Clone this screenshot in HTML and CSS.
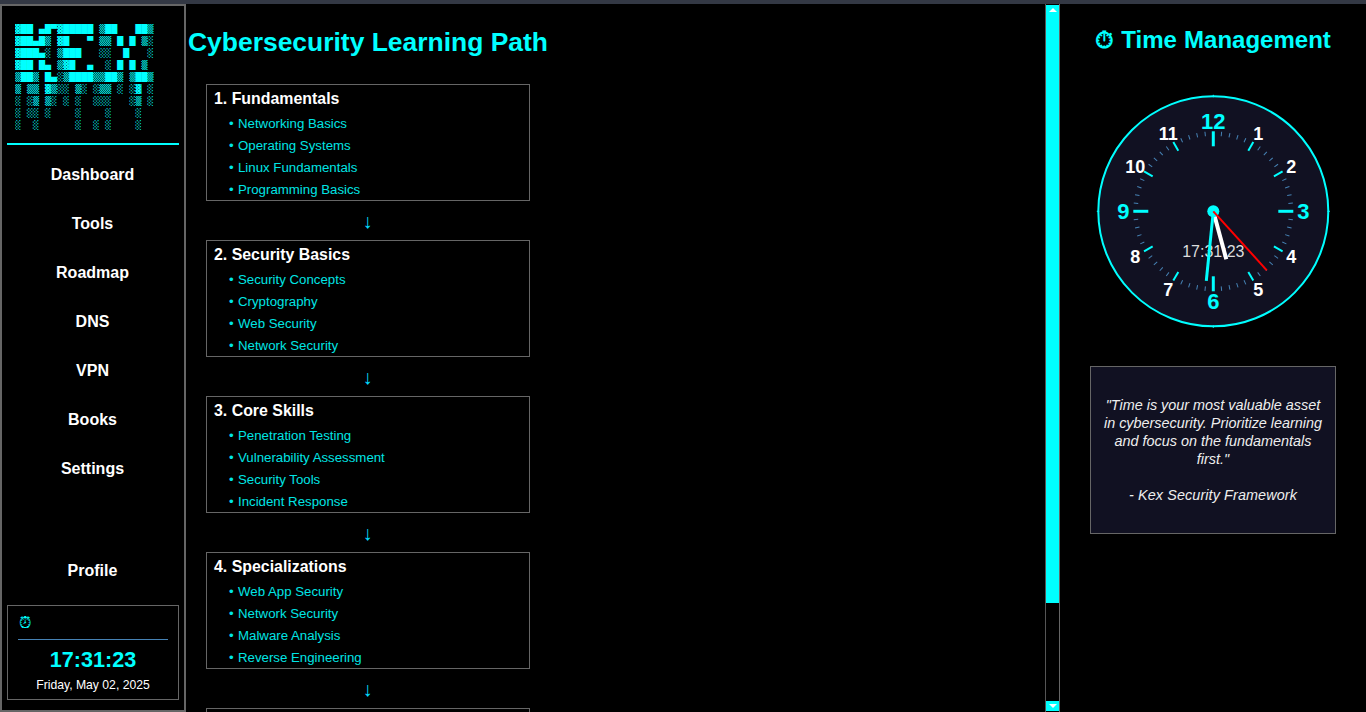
FILE: index.html
```html
<!DOCTYPE html>
<html lang="en">
<head>
<meta charset="utf-8">
<title>Cybersecurity Learning Path</title>
<link rel="stylesheet" href="styles.css">
</head>
<body>
<div class="app">
  <aside class="sidebar">
    <div class="logo-wrap">
      <div class="logo">
        <div class="logo-row">▓██ ▄█▀▓█████ ▒██   ██▒</div>
        <div class="logo-row">▓██▄█▒ ▓█   ▀ ▒▒ █ █ ▒░</div>
        <div class="logo-row">▓███▄░ ▒███   ░░  █   ░</div>
        <div class="logo-row">▓██ █▄ ▒▓█  ▄  ░ █ █ ▒</div>
        <div class="logo-row">▒██▒ █▄░▒████▒▒██▒ ▒██▒</div>
        <div class="logo-row">▒ ▒▒ ▓▒░░ ▒░ ░▒▒ ░ ░▓ ░</div>
        <div class="logo-row">░ ░▒ ▒░ ░ ░  ░░░   ░▒ ░</div>
        <div class="logo-row">░ ░░ ░    ░    ░    ░</div>
        <div class="logo-row">░  ░      ░  ░ ░    ░</div>
      </div>
    </div>
    <nav class="nav">
      <a class="nav-item">Dashboard</a>
      <a class="nav-item">Tools</a>
      <a class="nav-item">Roadmap</a>
      <a class="nav-item">DNS</a>
      <a class="nav-item">VPN</a>
      <a class="nav-item">Books</a>
      <a class="nav-item">Settings</a>
    </nav>
    <a class="nav-item profile">Profile</a>
    <div class="side-clock">
      <div class="side-clock-head">⏰&#xFE0E;</div>
      <div class="side-time">17:31:23</div>
      <div class="side-date">Friday, May 02, 2025</div>
    </div>
  </aside>

  <main class="main">
    <h1 class="page-title">Cybersecurity Learning Path</h1>
    <div class="path">
      <section class="step">
        <h2 class="step-title">1. Fundamentals</h2>
        <ul class="step-list">
          <li>Networking Basics</li>
          <li>Operating Systems</li>
          <li>Linux Fundamentals</li>
          <li>Programming Basics</li>
        </ul>
      </section>
      <div class="arrow">↓</div>
      <section class="step">
        <h2 class="step-title">2. Security Basics</h2>
        <ul class="step-list">
          <li>Security Concepts</li>
          <li>Cryptography</li>
          <li>Web Security</li>
          <li>Network Security</li>
        </ul>
      </section>
      <div class="arrow">↓</div>
      <section class="step">
        <h2 class="step-title">3. Core Skills</h2>
        <ul class="step-list">
          <li>Penetration Testing</li>
          <li>Vulnerability Assessment</li>
          <li>Security Tools</li>
          <li>Incident Response</li>
        </ul>
      </section>
      <div class="arrow">↓</div>
      <section class="step">
        <h2 class="step-title">4. Specializations</h2>
        <ul class="step-list">
          <li>Web App Security</li>
          <li>Network Security</li>
          <li>Malware Analysis</li>
          <li>Reverse Engineering</li>
        </ul>
      </section>
      <div class="arrow">↓</div>
      <section class="step"></section>
    </div>
  </main>

  <div class="scrollbar">
    <div class="sb-btn"><span class="sb-up"></span></div>
    <div class="sb-thumb"></div>
    <div class="sb-track"></div>
    <div class="sb-btn"><span class="sb-down"></span></div>
  </div>

  <aside class="time-panel">
    <h2 class="time-title">⏱ Time Management</h2>
    <svg class="clock" width="240" height="240" viewBox="-120.3 -120.3 240 240">
      <defs>
        <line id="mt" class="tick-min" x1="0" y1="-80" x2="0" y2="-75.5"/>
        <line id="ht" class="tick-hour" x1="0" y1="-80" x2="0" y2="-70"/>
        <line id="ct" class="tick-card" x1="0" y1="-80" x2="0" y2="-65"/>
        <line id="et" class="tick-edge" x1="0" y1="-116.5" x2="0" y2="-114"/>
      </defs>
      <circle class="face" r="115"/>
      <g>
        <use href="#et"/><use href="#et" transform="rotate(90)"/><use href="#et" transform="rotate(180)"/><use href="#et" transform="rotate(270)"/>
      </g>
      <g>
        <use href="#mt" transform="rotate(6)"/><use href="#mt" transform="rotate(12)"/><use href="#mt" transform="rotate(18)"/><use href="#mt" transform="rotate(24)"/>
        <use href="#mt" transform="rotate(36)"/><use href="#mt" transform="rotate(42)"/><use href="#mt" transform="rotate(48)"/><use href="#mt" transform="rotate(54)"/>
        <use href="#mt" transform="rotate(66)"/><use href="#mt" transform="rotate(72)"/><use href="#mt" transform="rotate(78)"/><use href="#mt" transform="rotate(84)"/>
        <use href="#mt" transform="rotate(96)"/><use href="#mt" transform="rotate(102)"/><use href="#mt" transform="rotate(108)"/><use href="#mt" transform="rotate(114)"/>
        <use href="#mt" transform="rotate(126)"/><use href="#mt" transform="rotate(132)"/><use href="#mt" transform="rotate(138)"/><use href="#mt" transform="rotate(144)"/>
        <use href="#mt" transform="rotate(156)"/><use href="#mt" transform="rotate(162)"/><use href="#mt" transform="rotate(168)"/><use href="#mt" transform="rotate(174)"/>
        <use href="#mt" transform="rotate(186)"/><use href="#mt" transform="rotate(192)"/><use href="#mt" transform="rotate(198)"/><use href="#mt" transform="rotate(204)"/>
        <use href="#mt" transform="rotate(216)"/><use href="#mt" transform="rotate(222)"/><use href="#mt" transform="rotate(228)"/><use href="#mt" transform="rotate(234)"/>
        <use href="#mt" transform="rotate(246)"/><use href="#mt" transform="rotate(252)"/><use href="#mt" transform="rotate(258)"/><use href="#mt" transform="rotate(264)"/>
        <use href="#mt" transform="rotate(276)"/><use href="#mt" transform="rotate(282)"/><use href="#mt" transform="rotate(288)"/><use href="#mt" transform="rotate(294)"/>
        <use href="#mt" transform="rotate(306)"/><use href="#mt" transform="rotate(312)"/><use href="#mt" transform="rotate(318)"/><use href="#mt" transform="rotate(324)"/>
        <use href="#mt" transform="rotate(336)"/><use href="#mt" transform="rotate(342)"/><use href="#mt" transform="rotate(348)"/><use href="#mt" transform="rotate(354)"/>
      </g>
      <g>
        <use href="#ht" transform="rotate(30)"/><use href="#ht" transform="rotate(60)"/><use href="#ht" transform="rotate(120)"/><use href="#ht" transform="rotate(150)"/>
        <use href="#ht" transform="rotate(210)"/><use href="#ht" transform="rotate(240)"/><use href="#ht" transform="rotate(300)"/><use href="#ht" transform="rotate(330)"/>
        <use href="#ct"/><use href="#ct" transform="rotate(90)"/><use href="#ct" transform="rotate(180)"/><use href="#ct" transform="rotate(270)"/>
      </g>
      <text class="num-main" x="0" y="-82">12</text>
      <text class="num" x="45" y="-71">1</text>
      <text class="num" x="78" y="-38">2</text>
      <text class="num-main" x="90" y="8">3</text>
      <text class="num" x="78" y="52">4</text>
      <text class="num" x="45" y="85">5</text>
      <text class="num-main" x="0" y="98">6</text>
      <text class="num" x="-45" y="85">7</text>
      <text class="num" x="-78" y="52">8</text>
      <text class="num-main" x="-90" y="8">9</text>
      <text class="num" x="-78" y="-38">10</text>
      <text class="num" x="-45" y="-71">11</text>
      <text class="clock-digital" x="0" y="46">17:31:23</text>
      <line class="hand-hour" x1="0" y1="0" x2="13" y2="48"/>
      <line class="hand-min" x1="0" y1="0" x2="-7" y2="69.5"/>
      <circle class="hub" r="6"/>
      <line class="hand-sec" x1="0" y1="0" x2="53.5" y2="59"/>
    </svg>
    <div class="quote">
      <p>"Time is your most valuable asset in cybersecurity. Prioritize learning and focus on the fundamentals first."</p>
      <p class="quote-src">- Kex Security Framework</p>
    </div>
  </aside>
</div>
</body>
</html>
```

FILE: styles.css
```css
* { box-sizing: border-box; }
html, body { margin: 0; height: 100%; overflow: hidden; background: #000; }
body { font-family: "Liberation Sans", Arial, sans-serif; color: #fff; border-top: 4px solid #333844; }
.app { display: flex; height: 100%; }

.sidebar {
  flex: 0 0 186px;
  display: flex;
  flex-direction: column;
  border: 2px solid #666;
  padding: 0 5px 10px;
  background: #000;
}
.logo-wrap { height: 139px; padding: 18px 0 0 8px; border-bottom: 2px solid #0ff; }
.logo { display: flex; flex-direction: column; gap: 2px; font-family: "DejaVu Sans Mono", monospace; font-size: 10px; color: #0ff; }
.logo-row { height: 10px; line-height: 10px; overflow: hidden; white-space: pre; }
.nav { display: flex; flex-direction: column; padding-top: 5px; }
.nav-item { display: flex; align-items: center; justify-content: center; height: 49px; padding-right: 1px; font-size: 16px; font-weight: 700; color: #fff; }
.profile { margin-top: auto; margin-bottom: 10px; }
.side-clock { height: 95px; border: 1px solid #666; padding: 0 10px; text-align: center; }
.side-clock-head { height: 34px; padding-left: 1px; border-bottom: 1px solid #4682b4; text-align: left; font-size: 16px; line-height: 33px; color: #0ff; font-family: "DejaVu Sans", sans-serif; }
.side-time { margin-top: 7px; font-size: 21.6px; font-weight: 700; line-height: 25px; color: #0ff; }
.side-date { margin-top: 6px; font-size: 12.2px; line-height: 14px; color: #fff; }

.main { flex: 1 1 auto; min-width: 0; height: 100%; overflow: hidden; padding: 0 0 0 2px; background: #000; }

.scrollbar { flex: 0 0 15px; display: flex; flex-direction: column; height: 100%; padding: 1px 0; border-left: 1px solid #555; border-right: 1px solid #666; background: #000; }
.sb-btn { flex: 0 0 10px; display: flex; align-items: center; justify-content: center; background: #0ff; }
.sb-up { border-left: 4px solid transparent; border-right: 4px solid transparent; border-bottom: 4px solid #fff; }
.sb-down { border-left: 4px solid transparent; border-right: 4px solid transparent; border-top: 4px solid #fff; }
.sb-thumb { flex: 0 0 588px; background: #0ff; }
.sb-track { flex: 1 1 auto; }

.page-title { margin: 0; padding-top: 22px; font-size: 26.45px; line-height: 32px; font-weight: 700; color: #0ff; }
.path { width: 324px; margin: 26px 0 4px 18px; }
.step { height: 117px; border: 1px solid #666; padding: 0 7px; }
.step-title { margin: 0 0 1px; font-size: 15.9px; line-height: 27px; font-weight: 700; color: #fff; }
.step-list { margin: 0; padding: 0 0 0 15px; list-style: none; }
.step-list li { height: 22px; font-size: 13.25px; line-height: 22px; color: #00e5e5; }
.step-list li::before { content: "•"; display: inline-block; width: 9px; }
.arrow { height: 39px; padding-right: 1px; text-align: center; font-size: 20px; line-height: 41px; color: #0df; }

.time-panel { flex: 0 0 306px; display: flex; flex-direction: column; align-items: center; padding: 0 30px; background: #000; }
.time-title { margin: 0; padding-top: 22px; font-size: 24px; line-height: 28px; font-weight: 700; color: #0ff; white-space: nowrap; word-spacing: 0.5px; }
.clock { display: block; flex: none; margin-top: 37px; }
.face { fill: #111122; stroke: #0ff; stroke-width: 2; }
.tick-min { stroke: #4682b4; stroke-width: 1; }
.tick-hour { stroke: #0ff; stroke-width: 2; }
.tick-card { stroke: #0ff; stroke-width: 3; }
.tick-edge { stroke: #0ff; stroke-width: 1; }
.num, .num-main, .clock-digital { font-family: "Liberation Sans", sans-serif; text-anchor: middle; }
.num { font-size: 18px; font-weight: 700; fill: #fff; }
.num-main { font-size: 22px; font-weight: 700; fill: #0ff; }
.clock-digital { font-size: 16px; fill: #ddd; }
.hand-hour { stroke: #fff; stroke-width: 4; }
.hand-min { stroke: #0ff; stroke-width: 3; }
.hand-sec { stroke: #f00; stroke-width: 2; }
.hub { fill: #0ff; }
.quote { width: 246px; height: 168px; margin-top: 35px; flex: none; display: flex; flex-direction: column; justify-content: center; padding: 0 10px; border: 1px solid #666; background: #111122; text-align: center; font-size: 14.4px; font-style: italic; line-height: 18px; color: #eee; }
.quote p { margin: 0; }
.quote .quote-src { margin-top: 18px; letter-spacing: 0.1px; }
```
